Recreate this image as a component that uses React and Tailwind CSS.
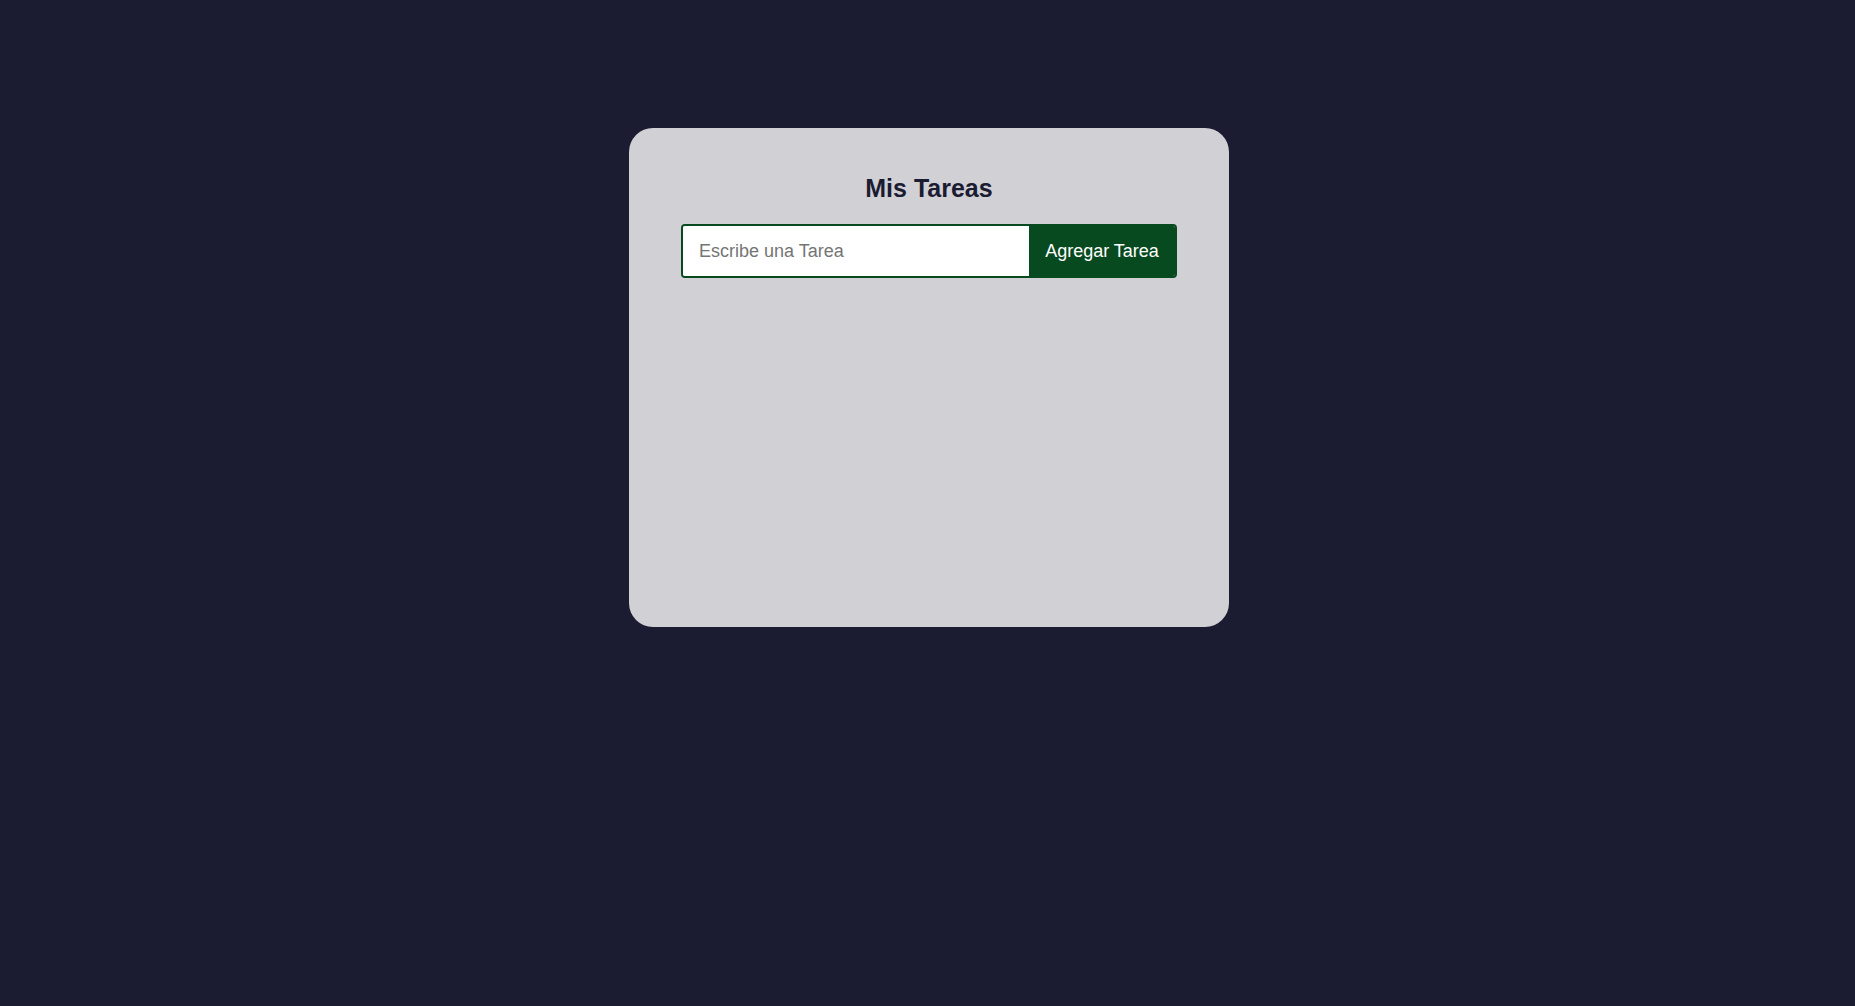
import React from 'react';

const App = () => {
    return (
        <div className="min-h-[1006px] w-full bg-[#1b1b32] flex flex-col items-center pt-[128px] font-['Liberation_Sans',Arial,sans-serif]">
            {/* Card */}
            <div className="ml-[3px] w-[600px] h-[499px] bg-[#d0d0d5] rounded-[24px] flex flex-col items-center pt-[45px]">
                <h1 className="text-[25px] leading-[30px] font-bold text-[#1b1b32]">Mis Tareas</h1>

                {/* Form */}
                <div className="mt-[21px] w-[496px] h-[54px] flex border-2 border-[#074a1f] rounded-[4px] overflow-hidden">
                    <input
                        type="text"
                        placeholder="Escribe una Tarea"
                        className="flex-1 min-w-0 bg-white px-[16px] text-[18px] text-[#1b1b32] placeholder:text-[#757575] outline-none"
                    />
                    <button className="w-[146px] bg-[#074a1f] text-white text-[18px] text-center">
                        Agregar Tarea
                    </button>
                </div>
            </div>
        </div>
    );
};

export default App;
